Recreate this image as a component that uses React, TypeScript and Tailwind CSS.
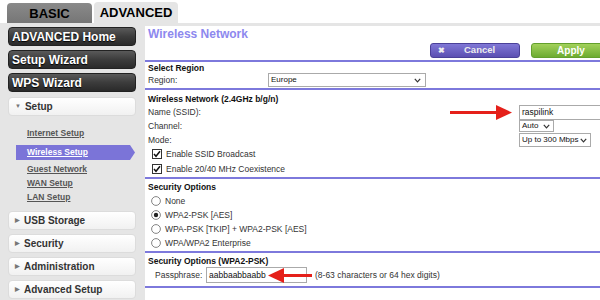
import React from "react";

const font = { fontFamily: '"Liberation Sans", Arial, sans-serif' };

function DarkBtn({ label }: { label: string }) {
  return (
    <div className="h-[19px] w-[128px] rounded-[4px] border border-[#222] bg-gradient-to-b from-[#5a5a5a] via-[#3c3c3c] to-[#2a2a2a] pl-[3px] text-[12px] font-bold leading-[18px] text-white [text-shadow:0_1px_1px_#000]">
      {label}
    </div>
  );
}

function LightBtn({ label, open }: { label: string; open?: boolean }) {
  return (
    <div className="flex h-[19px] w-[128px] items-center rounded-[4px] border border-[#dcdcdc] bg-gradient-to-b from-white to-[#f1f1f1] pl-[6px] text-[10px] font-bold text-[#333]">
      <span className="mr-[4px] text-[6px] text-[#777]">{open ? "▼" : "▶"}</span>
      {label}
    </div>
  );
}

function SubLink({ label }: { label: string }) {
  return (
    <div className="h-[14px] pl-[27px] text-[8.5px] font-bold leading-[14px] text-[#555] underline">
      {label}
    </div>
  );
}

function Checkbox() {
  return (
    <svg width="10" height="10" viewBox="0 0 10 10" className="shrink-0">
      <rect x="0.5" y="0.5" width="9" height="9" fill="#fff" stroke="#333" />
      <path d="M2 5 L4 7.3 L8 2.3" fill="none" stroke="#111" strokeWidth="1.5" />
    </svg>
  );
}

function Radio({ on }: { on?: boolean }) {
  return (
    <svg width="10" height="10" viewBox="0 0 10 10" className="shrink-0">
      <circle cx="5" cy="5" r="4.4" fill="#fff" stroke="#777" strokeWidth="0.9" />
      {on && <circle cx="5" cy="5" r="2.2" fill="#222" />}
    </svg>
  );
}

function Chevron() {
  return (
    <svg width="7" height="5" viewBox="0 0 7 5" className="shrink-0">
      <path d="M0.8 0.8 L3.5 3.8 L6.2 0.8" fill="none" stroke="#333" strokeWidth="1.2" />
    </svg>
  );
}

function ArrowRight() {
  return (
    <svg width="62" height="15" viewBox="0 0 62 15">
      <rect x="0" y="6" width="48" height="3" fill="#e5201a" />
      <polygon points="46,0 62,7.5 46,15" fill="#e5201a" />
    </svg>
  );
}

function ArrowLeft() {
  return (
    <svg width="44" height="15" viewBox="0 0 44 15">
      <rect x="14" y="6" width="30" height="3" fill="#e5201a" />
      <polygon points="16,0 0,7.5 16,15" fill="#e5201a" />
    </svg>
  );
}

export default function App() {
  return (
    <div className="h-[300px] w-[600px] overflow-hidden bg-white text-[#222]" style={font}>
      {/* tabs */}
      <div className="flex h-[23px] items-end gap-[2px] pl-[7px]">
        <div className="h-[20px] w-[85px] rounded-t-[4px] bg-gradient-to-b from-[#8a8a8a] to-[#767676] text-center text-[13px] font-bold leading-[21px] text-black">
          BASIC
        </div>
        <div className="h-[21px] w-[84px] rounded-t-[4px] bg-[#e5e5e5] text-center text-[13px] font-bold leading-[22px] text-black">
          ADVANCED
        </div>
      </div>

      <div className="flex h-[277px] bg-[#e5e5e5] pt-[3px]">
        {/* sidebar */}
        <div className="w-[145px] shrink-0 pl-[8px] pt-[1px]">
          <div className="flex flex-col gap-[4px]">
            <DarkBtn label="ADVANCED Home" />
            <DarkBtn label="Setup Wizard" />
            <DarkBtn label="WPS Wizard" />
          </div>
          <div className="mt-[5px]">
            <LightBtn label="Setup" open />
          </div>
          <div className="mt-[10px] -ml-[8px]">
            <SubLink label="Internet Setup" />
            <div className="mt-[5px] h-[15px] w-[135px] bg-[#7b74d8] pl-[27px] text-[8.5px] font-bold leading-[15px] text-white underline [clip-path:polygon(16px_0,130px_0,135px_50%,130px_100%,16px_100%)]">
              Wireless Setup
            </div>
            <div className="mt-[2px]">
              <SubLink label="Guest Network" />
              <SubLink label="WAN Setup" />
              <SubLink label="LAN Setup" />
            </div>
          </div>
          <div className="mt-[7px] flex flex-col gap-[4px]">
            <LightBtn label="USB Storage" />
            <LightBtn label="Security" />
            <LightBtn label="Administration" />
            <LightBtn label="Advanced Setup" />
          </div>
        </div>

        {/* main panel */}
        <div className="relative flex-1 overflow-hidden bg-white text-[8.5px] text-[#333]">
          <div className="h-[36px] border-b-2 border-[#7d79dc]">
            <div className="pl-[3px] pt-[1px] text-[12px] font-bold leading-[14px] text-[#8d88ee]">
              Wireless Network
            </div>
            <div className="mt-[2px] flex h-[15px] justify-end gap-[11px]">
              <div className="flex w-[90px] shrink-0 items-center rounded-[3px] border border-[#4b4199] bg-gradient-to-b from-[#8077d6] to-[#5c50b2] pl-[7px] text-[9.5px] font-bold text-[#eee]">
                <span className="text-[8px]">✖</span>
                <span className="ml-[19px]">Cancel</span>
              </div>
              <div className="-mr-[11px] flex w-[80px] shrink-0 items-center justify-center rounded-[3px] border border-[#63a02c] bg-gradient-to-b from-[#a2d15a] to-[#6dac30] text-[10px] font-bold text-white">
                Apply
              </div>
            </div>
          </div>

          <div className="h-[28px] border-b-2 border-[#7d79dc] pl-[3px]">
            <div className="h-[11px] pt-[1px] font-bold leading-[10px] text-[#111]">Select Region</div>
            <div className="flex h-[14px] items-center">
              <div className="w-[120px] shrink-0">Region:</div>
              <div className="flex h-[14px] w-[158px] shrink-0 items-center justify-between border border-[#aaa] pl-[2px] pr-[4px] text-[8px] text-[#111]">
                Europe
                <Chevron />
              </div>
            </div>
          </div>

          <div className="relative h-[89px] border-b-2 border-[#7d79dc] pl-[3px] pt-[3px]">
            <div className="h-[12px] font-bold leading-[12px] text-[#111]">Wireless Network (2.4GHz b/g/n)</div>
            <div className="flex h-[15px] items-center">
              <div className="w-[371px] shrink-0">Name (SSID):</div>
              <div className="h-[15px] w-[100px] shrink-0 border border-[#aaa] pl-[2px] text-[8.5px] leading-[13px] text-[#111]">raspilink</div>
            </div>
            <div className="flex h-[12px] items-center">
              <div className="w-[371px] shrink-0">Channel:</div>
              <div className="flex h-[12px] w-[35px] shrink-0 items-center justify-between border border-[#aaa] pl-[2px] pr-[3px] text-[8px] text-[#111]">
                Auto
                <Chevron />
              </div>
            </div>
            <div className="mt-[1px] flex h-[14px] items-center">
              <div className="w-[371px] shrink-0">Mode:</div>
              <div className="flex h-[14px] w-[72px] shrink-0 items-center justify-between border border-[#aaa] pl-[2px] pr-[3px] text-[8px] text-[#111]">
                Up to 300 Mbps
                <Chevron />
              </div>
            </div>
            <div className="flex h-[14px] items-center gap-[4px] pl-[4px]">
              <Checkbox />
              Enable SSID Broadcast
            </div>
            <div className="mt-[1px] flex h-[14px] items-center gap-[4px] pl-[4px]">
              <Checkbox />
              Enable 20/40 MHz Coexistence
            </div>
            <div className="absolute left-[305px] top-[15px]">
              <ArrowRight />
            </div>
          </div>

          <div className="h-[74px] border-b-2 border-[#7d79dc] pl-[3px] pt-[2px]">
            <div className="h-[13px] font-bold leading-[12px] text-[#111]">Security Options</div>
            {[
              { label: "None", on: false },
              { label: "WPA2-PSK [AES]", on: true },
              { label: "WPA-PSK [TKIP] + WPA2-PSK [AES]", on: false },
              { label: "WPA/WPA2 Enterprise", on: false },
            ].map((r) => (
              <div key={r.label} className="flex h-[14px] items-center gap-[4px] pl-[3px]">
                <Radio on={r.on} />
                {r.label}
              </div>
            ))}
          </div>

          <div className="relative h-[35px] border-b-2 border-[#7d79dc] pl-[3px] pt-[2px]">
            <div className="h-[12px] font-bold leading-[12px] text-[#111]">Security Options (WPA2-PSK)</div>
            <div className="flex h-[16px] items-center pl-[7px]">
              <span className="w-[51px] shrink-0">Passphrase:</span>
              <div className="h-[16px] w-[101px] shrink-0 border border-[#aaa] pl-[2px] leading-[14px] text-[#111]">aabbaabbaabb</div>
              <span className="ml-[8px]">(8-63 characters or 64 hex digits)</span>
            </div>
            <div className="absolute left-[123px] top-[15px]">
              <ArrowLeft />
            </div>
          </div>
        </div>
      </div>
    </div>
  );
}
